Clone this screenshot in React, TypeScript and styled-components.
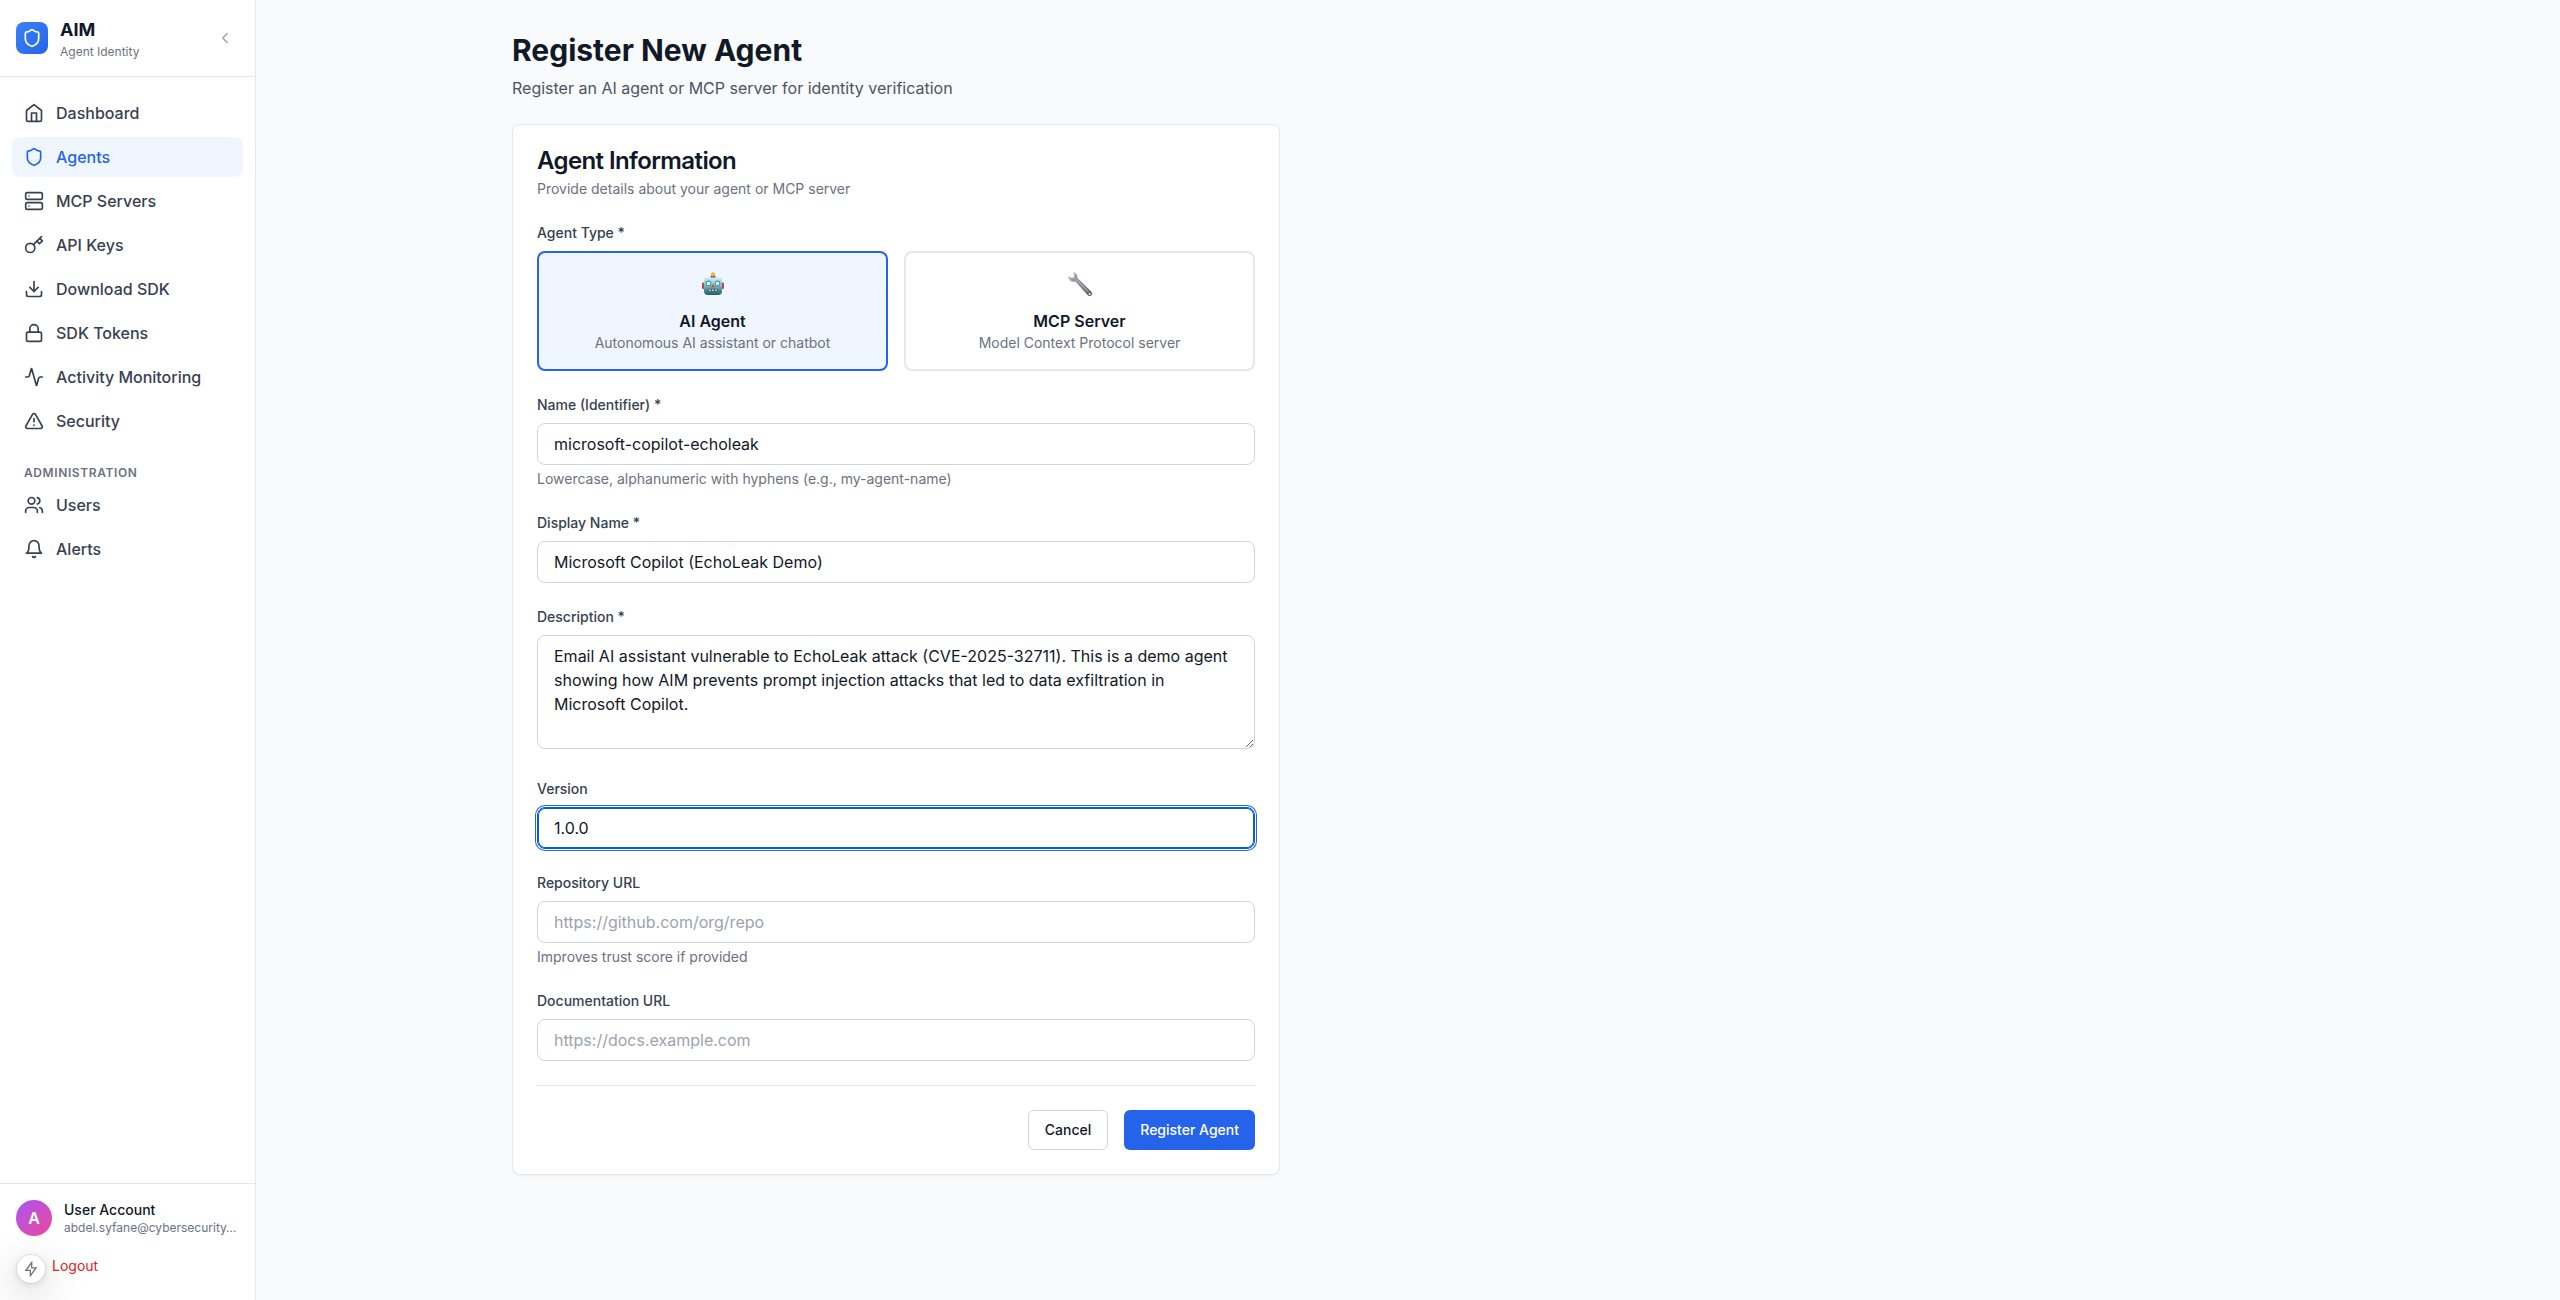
import React from "react";
import styled, { createGlobalStyle } from "styled-components";
import {
  Activity,
  ChevronLeft,
  Download,
  Lock,
  LogOut,
  Server,
  Shield,
  TriangleAlert,
  Users,
} from "lucide-react";

const GlobalStyle = createGlobalStyle`
  *, *::before, *::after { box-sizing: border-box; }
  body {
    margin: 0;
    background: #f9fafb;
    color: #111827;
    font-family: Inter, "Noto Sans", sans-serif;
    font-size: 16px;
    line-height: 24px;
  }
  h1, h2, p { margin: 0; }
  button, input, textarea { font: inherit; color: inherit; }
`;

const Layout = styled.div`
  display: flex;
  height: 100vh;
  overflow: hidden;
`;

const Sidebar = styled.aside`
  display: flex;
  flex-direction: column;
  flex: none;
  width: 256px;
  background: #fff;
  border-right: 1px solid #e5e7eb;
`;

const SidebarHeader = styled.div`
  display: flex;
  align-items: center;
  justify-content: space-between;
  padding: 16px;
  border-bottom: 1px solid #e5e7eb;
`;

const Brand = styled.div`
  display: flex;
  align-items: center;
  gap: 12px;
`;

const Logo = styled.div`
  display: flex;
  align-items: center;
  justify-content: center;
  width: 32px;
  height: 32px;
  border-radius: 8px;
  color: #fff;
  background: linear-gradient(to bottom right, #3b82f6, #2563eb);
`;

const BrandName = styled.div`
  font-size: 18px;
  line-height: 28px;
  font-weight: 700;
`;

const BrandTag = styled.div`
  font-size: 12px;
  line-height: 16px;
  color: #6b7280;
`;

const CollapseButton = styled.button`
  display: flex;
  padding: 5px;
  border: 0;
  border-radius: 8px;
  background: none;
  color: #9ca3af;
`;

const Nav = styled.nav`
  flex: 1;
  display: flex;
  flex-direction: column;
  gap: 4px;
  padding: 16px 12px;
`;

const NavItem = styled.a<{ $active?: boolean }>`
  display: flex;
  align-items: center;
  gap: 12px;
  padding: 8px 12px;
  border-radius: 8px;
  font-weight: 500;
  color: ${(p) => (p.$active ? "#2563eb" : "#374151")};
  background: ${(p) => (p.$active ? "#eff6ff" : "transparent")};
`;

const NavHeading = styled.div`
  margin-top: 20px;
  padding: 0 12px;
  font-size: 12px;
  line-height: 16px;
  font-weight: 600;
  letter-spacing: 0.05em;
  text-transform: uppercase;
  color: #6b7280;
`;

const SidebarFooter = styled.div`
  display: flex;
  flex-direction: column;
  gap: 12px;
  padding: 16px;
  border-top: 1px solid #e5e7eb;
`;

const Account = styled.div`
  display: flex;
  align-items: center;
  gap: 12px;
`;

const Avatar = styled.div`
  display: flex;
  align-items: center;
  justify-content: center;
  flex: none;
  width: 36px;
  height: 36px;
  border-radius: 50%;
  font-weight: 600;
  color: #fff;
  background: linear-gradient(to bottom right, #a855f7, #ec4899);
`;

const AccountName = styled.div`
  font-size: 14px;
  line-height: 20px;
  font-weight: 500;
`;

const AccountEmail = styled.div`
  white-space: nowrap;
  font-size: 12px;
  line-height: 16px;
  color: #6b7280;
`;

const LogoutButton = styled.button`
  display: flex;
  align-items: center;
  gap: 8px;
  padding: 8px 12px;
  border: 0;
  background: none;
  font-size: 14px;
  line-height: 20px;
  color: #dc2626;
`;

const DevBadge = styled.div`
  position: fixed;
  left: 17px;
  bottom: 17px;
  display: flex;
  align-items: center;
  justify-content: center;
  width: 28px;
  height: 28px;
  border-radius: 50%;
  background: #fff;
  color: #737373;
  box-shadow: 0 0 0 1px rgba(0, 0, 0, 0.08), 0 11px 40px 0 rgba(0, 0, 0, 0.25),
    0 2px 10px 0 rgba(0, 0, 0, 0.12);
`;

const Main = styled.main`
  flex: 1;
  padding: 32px 256px;
`;

const Page = styled.div`
  display: flex;
  flex-direction: column;
  gap: 24px;
  width: 768px;
`;

const PageTitle = styled.h1`
  font-size: 30px;
  line-height: 36px;
  font-weight: 700;
`;

const PageLead = styled.p`
  margin-top: 8px;
  color: #4b5563;
`;

const Card = styled.section`
  display: flex;
  flex-direction: column;
  gap: 24px;
  padding: 24px;
  border: 1px solid #e5e7eb;
  border-radius: 8px;
  background: #fff;
  box-shadow: 0 1px 2px rgba(0, 0, 0, 0.05);
`;

const CardTitle = styled.h2`
  font-size: 24px;
  line-height: 24px;
  font-weight: 600;
  letter-spacing: -0.025em;
`;

const CardLead = styled.p`
  margin-top: 6px;
  font-size: 14px;
  line-height: 20px;
  color: #6b7280;
`;

const Form = styled.form`
  display: flex;
  flex-direction: column;
  gap: 24px;
`;

const Label = styled.label`
  display: block;
  margin-bottom: 8px;
  font-size: 14px;
  line-height: 20px;
  font-weight: 500;
  color: #374151;
`;

const TypeGrid = styled.div`
  display: grid;
  grid-template-columns: 1fr 1fr;
  gap: 16px;
`;

const TypeOption = styled.button<{ $selected?: boolean }>`
  display: block;
  padding: 16px;
  border: 2px solid ${(p) => (p.$selected ? "#2563eb" : "#e5e7eb")};
  border-radius: 8px;
  background: ${(p) => (p.$selected ? "#eff6ff" : "#fff")};
  text-align: center;
`;

const TypeIcon = styled.div`
  display: flex;
  align-items: center;
  justify-content: center;
  height: 32px;
  padding-bottom: 2px;
  margin-bottom: 8px;
`;

const TypeName = styled.div`
  font-weight: 600;
`;

const TypeHint = styled.div`
  font-size: 14px;
  line-height: 20px;
  color: #6b7280;
`;

const Input = styled.input<{ $focused?: boolean }>`
  display: block;
  width: 100%;
  height: 42px;
  padding: 8px 16px;
  border: 1px solid ${(p) => (p.$focused ? "#005fcc" : "#d1d5db")};
  border-radius: 8px;
  outline: none;
  background: #fff;
  box-shadow: ${(p) =>
    p.$focused ? "inset 0 0 0 1px #005fcc, 0 0 0 1px #fff, 0 0 0 2px #2563eb" : "none"};
  &::placeholder { color: #9ca3af; opacity: 1; }
`;

const TextArea = styled.textarea`
  display: block;
  width: 100%;
  height: 114px;
  margin-bottom: 6px;
  padding: 8px 16px;
  border: 1px solid #d1d5db;
  border-radius: 8px;
  outline: none;
  background: #fff;
  resize: vertical;
`;

const Help = styled.p`
  margin-top: 4px;
  font-size: 14px;
  line-height: 20px;
  color: #6b7280;
`;

const Actions = styled.div`
  display: flex;
  justify-content: flex-end;
  gap: 16px;
  padding-top: 24px;
  border-top: 1px solid #e5e7eb;
`;

const Button = styled.button<{ $primary?: boolean }>`
  height: 40px;
  padding: 0 16px;
  border: ${(p) => (p.$primary ? "0" : "1px solid #d1d5db")};
  border-radius: 6px;
  background: ${(p) => (p.$primary ? "#2563eb" : "#fff")};
  color: ${(p) => (p.$primary ? "#fff" : "#111827")};
  font-size: 14px;
  line-height: 20px;
  font-weight: 500;
`;

type IconProps = { size?: number };

const OutlineIcon = ({ size = 20, children }: IconProps & { children: React.ReactNode }) => (
  <svg
    width={size}
    height={size}
    viewBox="0 0 24 24"
    fill="none"
    stroke="currentColor"
    strokeWidth="2"
    strokeLinecap="round"
    strokeLinejoin="round"
  >
    {children}
  </svg>
);

const HomeIcon = ({ size }: IconProps) => (
  <OutlineIcon size={size}>
    <path d="m3 9 9-7 9 7v11a2 2 0 0 1-2 2H5a2 2 0 0 1-2-2z" />
    <polyline points="9 22 9 12 15 12 15 22" />
  </OutlineIcon>
);

const KeyIcon = ({ size }: IconProps) => (
  <OutlineIcon size={size}>
    <circle cx="7.5" cy="15.5" r="5.5" />
    <path d="m21 2-9.6 9.6" />
    <path d="m15.5 7.5 3 3L22 7l-3-3" />
  </OutlineIcon>
);

const BellIcon = ({ size }: IconProps) => (
  <OutlineIcon size={size}>
    <path d="M6 8a6 6 0 0 1 12 0c0 7 3 9 3 9H3s3-2 3-9" />
    <path d="M10.3 21a1.94 1.94 0 0 0 3.4 0" />
  </OutlineIcon>
);

const BoltIcon = () => (
  <svg width="16" height="16" viewBox="0 0 16 16" fill="none" stroke="currentColor" strokeWidth="1.3">
    <path d="M8.700 1.500 2.900 9.300H7.400V14.700L13.100 6.800H8.700Z" />
  </svg>
);

const Robot = () => (
  <svg width="24" height="24" viewBox="0 0 24 24">
    <defs>
      <linearGradient id="robotHead" x1="0" y1="0" x2="0" y2="1">
        <stop offset="0" stopColor="#d5efec" />
        <stop offset="0.45" stopColor="#8fbcc0" />
        <stop offset="0.75" stopColor="#3f8792" />
        <stop offset="1" stopColor="#1d5f6d" />
      </linearGradient>
    </defs>
    <rect x="1" y="10.5" width="3" height="6.5" rx="1.2" fill="#c2424d" />
    <rect x="20" y="10.5" width="3" height="6.5" rx="1.2" fill="#c2424d" />
    <rect x="9.6" y="3.4" width="4.8" height="2.6" rx="0.8" fill="#5b4b8f" />
    <circle cx="12" cy="2.4" r="2.1" fill="#f7b52c" />
    <path d="M5 5.5h14q2 0 2 2v11.5q0 4-4 4H7q-4 0-4-4V7.5q0-2 2-2z" fill="url(#robotHead)" />
    <circle cx="7.5" cy="11.5" r="2.9" fill="#2ba3c4" />
    <circle cx="16.5" cy="11.5" r="2.9" fill="#2ba3c4" />
    <circle cx="7.5" cy="11.5" r="1.7" fill="#fff" />
    <circle cx="16.5" cy="11.5" r="1.7" fill="#fff" />
    <path d="M12 11.8l1.9 3.5h-3.8z" fill="#e04a3c" />
    <rect x="7.2" y="16.8" width="9.6" height="3" rx="1" fill="#43606a" />
    <path d="M8.2 18.3h1.6M11.2 18.3h1.6M14.2 18.3h1.6" stroke="#e8d9d4" strokeWidth="1.6" />
  </svg>
);

const Wrench = () => (
  <svg width="26" height="26" viewBox="0 0 26 26">
    <defs>
      <linearGradient id="wrenchSteel" x1="0" y1="0" x2="1" y2="1">
        <stop offset="0" stopColor="#a9b4bd" />
        <stop offset="0.5" stopColor="#8b8b92" />
        <stop offset="1" stopColor="#6b5a58" />
      </linearGradient>
    </defs>
    <path
      d="M6 1.2C8.8 1.500 10.8 3.5 10.7 7.2L24.3 20.6C25.6 22.2 25.2 24 24 24.7C22.7 25.4 21.3 25 20.2 23.8L8.5 10.6C5 11.6 1.8 9.5 1.2 5.2L4.2 7.1L6.9 6.6L7.4 3.7Z"
      fill="url(#wrenchSteel)"
    />
    <path d="M9.8 8.8L21 20.6" stroke="#c3c6cc" strokeWidth="0.9" />
    <circle cx="22.7" cy="22.9" r="1" fill="#f1eeee" />
  </svg>
);

type NavLink = { label: string; icon: React.ComponentType<IconProps> };

const mainLinks: NavLink[] = [
  { label: "Dashboard", icon: HomeIcon },
  { label: "Agents", icon: Shield },
  { label: "MCP Servers", icon: Server },
  { label: "API Keys", icon: KeyIcon },
  { label: "Download SDK", icon: Download },
  { label: "SDK Tokens", icon: Lock },
  { label: "Activity Monitoring", icon: Activity },
  { label: "Security", icon: TriangleAlert },
];

const adminLinks: NavLink[] = [
  { label: "Users", icon: Users },
  { label: "Alerts", icon: BellIcon },
];

const description =
  "Email AI assistant vulnerable to EchoLeak attack (CVE-2025-32711). This is a demo agent showing how AIM prevents prompt injection attacks that led to data exfiltration in Microsoft Copilot.";

export default function App() {
  return (
    <Layout>
      <GlobalStyle />
      <Sidebar>
        <SidebarHeader>
          <Brand>
            <Logo>
              <Shield size={20} />
            </Logo>
            <div>
              <BrandName>AIM</BrandName>
              <BrandTag>Agent Identity</BrandTag>
            </div>
          </Brand>
          <CollapseButton type="button" aria-label="Collapse sidebar">
            <ChevronLeft size={18} />
          </CollapseButton>
        </SidebarHeader>
        <Nav>
          {mainLinks.map(({ label, icon: Icon }) => (
            <NavItem key={label} $active={label === "Agents"}>
              <Icon size={20} />
              {label}
            </NavItem>
          ))}
          <NavHeading>Administration</NavHeading>
          {adminLinks.map(({ label, icon: Icon }) => (
            <NavItem key={label}>
              <Icon size={20} />
              {label}
            </NavItem>
          ))}
        </Nav>
        <SidebarFooter>
          <Account>
            <Avatar>A</Avatar>
            <div>
              <AccountName>User Account</AccountName>
              <AccountEmail>abdel.syfane@cybersecurity…</AccountEmail>
            </div>
          </Account>
          <LogoutButton type="button">
            <LogOut size={16} />
            Logout
          </LogoutButton>
        </SidebarFooter>
      </Sidebar>
      <Main>
        <Page>
          <header>
            <PageTitle>Register New Agent</PageTitle>
            <PageLead>Register an AI agent or MCP server for identity verification</PageLead>
          </header>
          <Card>
            <div>
              <CardTitle>Agent Information</CardTitle>
              <CardLead>Provide details about your agent or MCP server</CardLead>
            </div>
            <Form>
              <div>
                <Label>Agent Type *</Label>
                <TypeGrid>
                  <TypeOption type="button" $selected>
                    <TypeIcon>
                      <Robot />
                    </TypeIcon>
                    <TypeName>AI Agent</TypeName>
                    <TypeHint>Autonomous AI assistant or chatbot</TypeHint>
                  </TypeOption>
                  <TypeOption type="button">
                    <TypeIcon>
                      <Wrench />
                    </TypeIcon>
                    <TypeName>MCP Server</TypeName>
                    <TypeHint>Model Context Protocol server</TypeHint>
                  </TypeOption>
                </TypeGrid>
              </div>
              <div>
                <Label>Name (Identifier) *</Label>
                <Input defaultValue="microsoft-copilot-echoleak" />
                <Help>Lowercase, alphanumeric with hyphens (e.g., my-agent-name)</Help>
              </div>
              <div>
                <Label>Display Name *</Label>
                <Input defaultValue="Microsoft Copilot (EchoLeak Demo)" />
              </div>
              <div>
                <Label>Description *</Label>
                <TextArea defaultValue={description} spellCheck={false} />
              </div>
              <div>
                <Label>Version</Label>
                <Input $focused defaultValue="1.0.0" />
              </div>
              <div>
                <Label>Repository URL</Label>
                <Input placeholder="https://github.com/org/repo" />
                <Help>Improves trust score if provided</Help>
              </div>
              <div>
                <Label>Documentation URL</Label>
                <Input placeholder="https://docs.example.com" />
              </div>
              <Actions>
                <Button type="button">Cancel</Button>
                <Button type="button" $primary>
                  Register Agent
                </Button>
              </Actions>
            </Form>
          </Card>
        </Page>
      </Main>
      <DevBadge>
        <BoltIcon />
      </DevBadge>
    </Layout>
  );
}
